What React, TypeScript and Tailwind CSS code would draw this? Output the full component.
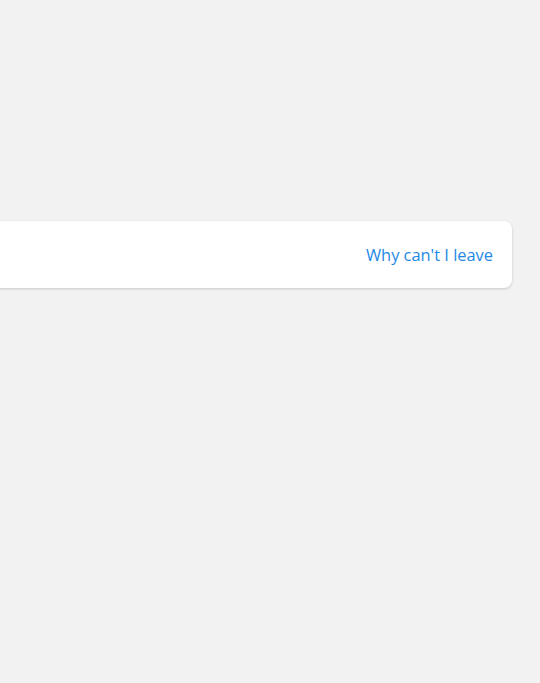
export default function App() {
  return (
    <div className="min-h-[683px] w-full overflow-hidden bg-[#f2f2f2] pt-[221px]">
      <div className="-ml-[20px] mr-[28px] flex h-[67px] items-center justify-end rounded-[8px] bg-white pr-[19px] pt-[2px] shadow-[0_1px_3px_rgba(0,0,0,0.18)]">
        <a
          href="#"
          className="text-[16.4px] text-[#1e88e5] [font-family:'Open_Sans',sans-serif]"
        >
          Why can't I leave
        </a>
      </div>
    </div>
  );
}
